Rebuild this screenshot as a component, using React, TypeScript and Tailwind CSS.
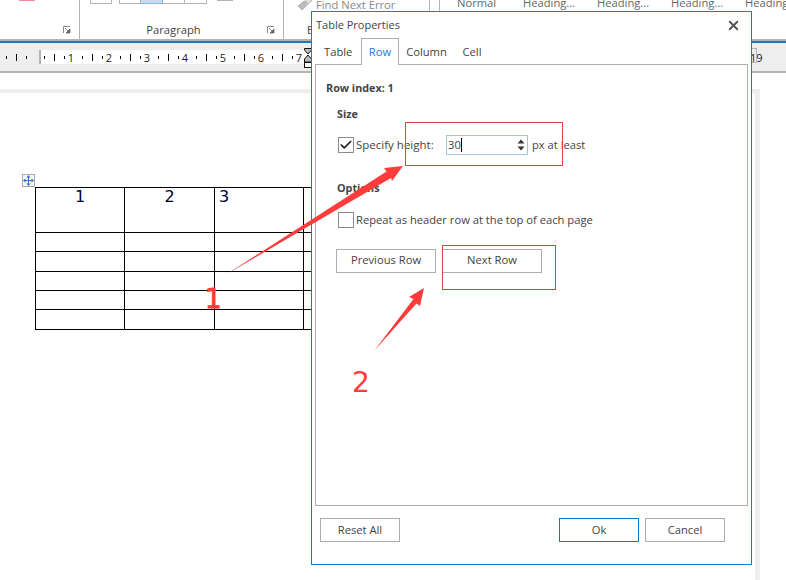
import { Check, X } from "lucide-react";

const sans = "font-['Open_Sans','Noto_Sans',sans-serif]";

function RulerInch({ n }: { n: number }) {
  return (
    <div className="flex h-full w-[38px] shrink-0 items-center">
      <span className="w-[10px]"><span className="block h-[3px] w-px bg-black" /></span>
      <span className="w-[10px]"><span className="block h-[7px] w-px bg-black" /></span>
      <span className="w-[2px]"><span className="block h-[3px] w-px bg-black" /></span>
      <span className="w-[10px] text-center text-[11px] leading-none text-[#222]">{n}</span>
      <span className="w-[6px]" />
    </div>
  );
}

function RibbonLauncher({ className }: { className: string }) {
  return (
    <svg className={`absolute h-[8px] w-[8px] ${className}`} viewBox="0 0 8 8">
      <path d="M.5 7V.5H7" fill="none" stroke="#888" />
      <path d="M2 2l4 4M7 3v4H3z" fill="#666" stroke="#666" strokeWidth="0.8" />
    </svg>
  );
}

function Ribbon() {
  return (
    <div className="relative flex h-[41px] shrink-0 border-b-2 border-[#b4b4b4] bg-white text-[#444]">
      <div className="relative w-[80px] shrink-0 border-r border-[#b4b4b4]">
        <div className="ml-[19px] h-px w-[16px] bg-[#f08a9c]" />
        <RibbonLauncher className="left-[63px] top-[26px]" />
      </div>
      <div className="relative flex w-[204px] shrink-0 flex-col border-r border-[#b4b4b4]">
        <div className="ml-[10px] flex">
          <div className="h-[4px] w-[22px] border-x border-b border-[#b4b4b4]" />
          <div className="ml-[7px] h-[4px] w-[22px] border-x border-b border-[#b4b4b4]" />
          <div className="h-[4px] w-[22px] border-b border-r border-[#8fb7da] bg-[#c5dcf0]" />
          <div className="h-[4px] w-[22px] border-b border-r border-[#b4b4b4]" />
          <div className="h-[4px] w-[22px] border-b border-r border-[#b4b4b4]" />
          <div className="ml-[10px] h-px w-[16px] bg-[#b4b4b4]" />
        </div>
        <div className="mt-[18px] pr-[16px] text-center text-[11.2px] leading-4">Paragraph</div>
        <RibbonLauncher className="left-[187px] top-[26px]" />
      </div>
      <div className="relative w-[146px] shrink-0 border-r border-[#b4b4b4] pl-[13px]">
        <div className="flex h-[9px] items-center">
          <svg className="h-[13px] w-[16px] shrink-0" viewBox="0 0 16 13">
            <path d="M1 8l6-5 4 3-6 6z" fill="#bbb" stroke="#999" strokeWidth="0.6" />
            <path d="M8 3l3-3 4 3-4 3z" fill="#ddd" stroke="#aaa" strokeWidth="0.6" />
          </svg>
          <span className="ml-[3px] text-[11.2px] leading-none text-[#888]">Find Next Error</span>
        </div>
        <div className="ml-[10px] mt-[13px] text-[11.2px] leading-4">E</div>
      </div>
      <div className="ml-[9px] h-[11px] border-l border-[#b4b4b4]" />
      <div className="mt-[-6px] flex h-[18px] text-[11.2px] leading-[18px] text-[#666]">
        <span className="ml-[17px] w-[66px]">Normal</span>
        <span className="w-[74px]">Heading...</span>
        <span className="w-[74px]">Heading...</span>
        <span className="w-[74px]">Heading...</span>
        <span className="whitespace-nowrap">Heading...</span>
      </div>
    </div>
  );
}

function Ruler() {
  return (
    <div className="flex h-[32px] shrink-0 items-center border-t-2 border-b-2 border-t-[#1b79c4] border-b-[#b4b4b4] bg-[#eeeeee]">
      <div className="flex h-[14px] w-[41px] shrink-0 items-center border-r-2 border-[#b4b4b4] bg-[#eeeeee] pl-[6px]">
        <span className="w-[10px]"><span className="block h-[3px] w-px bg-black" /></span>
        <span className="w-[10px]"><span className="block h-[7px] w-px bg-black" /></span>
        <span className="w-[10px]"><span className="block h-[3px] w-px bg-black" /></span>
      </div>
      <div className="flex h-[14px] w-[711px] shrink-0 items-center bg-white pl-[3px]">
        {[1, 2, 3, 4, 5, 6, 7].map((n) => (
          <RulerInch key={n} n={n} />
        ))}
        {/* inches 8-18 sit behind the dialog */}
        <div className="w-[418px] shrink-0" />
        <RulerInch n={19} />
      </div>
    </div>
  );
}

function IndentMarker() {
  return (
    <svg className="absolute left-[304px] top-[47px] h-[21px] w-[8px]" viewBox="0 0 8 21">
      <path d="M.5 1.500H7.500V3L4 7 .5 3z" fill="#bbb" stroke="#111" strokeWidth="1" />
      <path d="M4 8L7.500 12V15H.5V12z" fill="#bbb" stroke="#111" strokeWidth="1" />
      <rect x=".5" y="15.500" width="7" height="5" fill="#fff" stroke="#111" strokeWidth="1" />
    </svg>
  );
}

function DocTable() {
  const rows = ["h-[45px]", "h-[19px]", "h-[20px]", "h-[19px]", "h-[19px]", "h-[20px]"];
  return (
    <table className="ml-[35px] w-[357px] table-fixed border-collapse font-['DejaVu_Sans',sans-serif] text-[16px] leading-none text-[#000033]">
      <tbody>
        {rows.map((h, i) => (
          <tr key={i} className={h}>
            <td className="w-[89px] border border-black pt-px text-center align-top">{i === 0 ? "1" : ""}</td>
            <td className="w-[90px] border border-black pt-px text-center align-top">{i === 0 ? "2" : ""}</td>
            <td className="w-[89px] border border-black pl-[4px] pt-px align-top">{i === 0 ? "3" : ""}</td>
            <td className="w-[89px] border border-black" />
          </tr>
        ))}
      </tbody>
    </table>
  );
}

function Document() {
  return (
    <div className="flex-1 bg-white pt-[16px]">
      <div className="h-full w-[760px] border-r-[5px] border-t-[4px] border-[#eeeeee] bg-white pt-[81px]">
        <div className="ml-[22px] flex h-[13px] w-[13px] items-center justify-center border border-[#aaa] bg-[#f4f7fc]">
          <svg className="h-[11px] w-[11px]" viewBox="0 0 11 11">
            <path d="M5.500 1.500v8M1.500 5.500h8" fill="none" stroke="#3a6cc8" />
            <path d="M5.500 0L7.500 2.500H3.500zM5.500 11L3.500 8.500H7.500zM0 5.500L2.500 3.500V7.500zM11 5.500L8.500 7.500V3.500z" fill="#3a6cc8" />
          </svg>
        </div>
        <DocTable />
      </div>
    </div>
  );
}

function DialogButton({ label, primary, className }: { label: string; primary?: boolean; className: string }) {
  return (
    <button className={`h-[24px] text-[11.2px] text-[#444] border ${primary ? "border-[#0b78c9]" : "border-[#adadad]"} bg-white ${className}`}>
      {label}
    </button>
  );
}

function CheckBox({ checked }: { checked?: boolean }) {
  return (
    <span className="flex h-[16px] w-[16px] shrink-0 items-center justify-center border border-[#8a8a8a] bg-white">
      {checked && <Check className="h-[14px] w-[14px] text-[#222]" strokeWidth={3} />}
    </span>
  );
}

function TableProperties() {
  return (
    <div className={`absolute left-[311px] top-[11px] flex h-[554px] w-[441px] flex-col border border-[#1979ca] bg-white px-[3px] text-[11.2px] text-[#444] ${sans}`}>
      <div className="flex h-[26px] shrink-0 items-center justify-between pl-[1px] pr-[7px] pt-[1px]">
        <span className="text-[11px]">Table Properties</span>
        <X className="h-[15px] w-[15px] text-[#555]" strokeWidth={3} />
      </div>
      <div className="z-10 -mb-px flex h-[27px] shrink-0 items-end pl-[9px]">
        <span className="flex h-[26px] w-[37px] items-center">Table</span>
        <span className="flex h-[27px] w-[38px] items-center justify-center border-x border-t border-[#adadad] bg-white text-[#2b7cd3]">Row</span>
        <span className="flex h-[26px] w-[55px] items-center justify-center">Column</span>
        <span className="flex h-[26px] w-[36px] items-center justify-center">Cell</span>
      </div>
      <div className="h-[442px] w-[433px] shrink-0 border border-[#adadad] pl-[10px] pt-[15px]">
        <div className="text-[10.8px] font-bold leading-4">Row index: 1</div>
        <div className="ml-[1px] pl-[10px]">
          <div className="mt-[10px] text-[10.8px] font-bold leading-4">Size</div>
          <div className="mt-[13px] flex h-[20px] items-center">
            <div className="ml-px flex w-[108px] items-center gap-[2px]">
              <CheckBox checked />
              <span className="text-[11.5px]">Specify height:</span>
            </div>
            <div className="flex h-[20px] w-[82px] items-center justify-between border border-[#a3c6df] pl-px pr-[2px]">
              <span className="flex items-center">30<span className="h-[14px] w-px bg-black" /></span>
              <svg className="h-[14px] w-[8px]" viewBox="0 0 8 14">
                <path d="M4 1.500L7.500 5.500H.5z" fill="#333" />
                <path d="M.5 8.500H7.500L4 12.500z" fill="#333" />
              </svg>
            </div>
            <span className="ml-[4px]">px at least</span>
          </div>
          <div className="mt-[25px] text-[10.8px] font-bold leading-4">Options</div>
          <div className="ml-px mt-[16px] flex items-center gap-[2px]">
            <CheckBox />
            <span>Repeat as header row at the top of each page</span>
          </div>
          <div className="-ml-px mt-[20px] flex gap-[6px]">
            <DialogButton label="Previous Row" className="w-[100px]" />
            <DialogButton label="Next Row" className="w-[100px]" />
          </div>
        </div>
      </div>
      <div className="mt-[12px] flex pl-[5px]">
        <DialogButton label="Reset All" className="w-[80px]" />
        <DialogButton label="Ok" primary className="ml-[159px] w-[80px]" />
        <DialogButton label="Cancel" className="ml-[6px] w-[80px]" />
      </div>
    </div>
  );
}

function Annotations() {
  return (
    <>
      <div className="absolute left-[405px] top-[122px] h-[44px] w-[158px] border border-[#f03c3c]" />
      <div className="absolute left-[442px] top-[245px] h-[45px] w-[114px] border border-[#f03c3c]" />
      <svg className="absolute left-0 top-0 h-[580px] w-[786px]" viewBox="0 0 786 580">
        <path d="M227 274L386.500 171.500 384 168 403 166 392 181 391 178z" fill="#ff3b3b" />
        <path d="M374 351L413.500 299 409 297 424 288 420 306 416.500 303.500z" fill="#ff3b3b" />
      </svg>
      <span className="absolute left-[205px] top-[284px] font-['DejaVu_Sans',sans-serif] text-[26px] leading-[30px] text-[#ff3b3b] [-webkit-text-stroke:1px_#ff3b3b]">1</span>
      <span className="absolute left-[352px] top-[368px] font-['DejaVu_Sans',sans-serif] text-[28px] leading-[30px] text-[#ff3b3b]">2</span>
    </>
  );
}

export default function App() {
  return (
    <div className={`relative flex h-[580px] w-[786px] flex-col overflow-hidden bg-white ${sans}`}>
      <Ribbon />
      <Ruler />
      <Document />
      <IndentMarker />
      <div className="absolute left-[752px] top-[48px] h-[15px] w-[5px] border-y border-r border-[#b4b4b4]" />
      <TableProperties />
      <Annotations />
    </div>
  );
}
